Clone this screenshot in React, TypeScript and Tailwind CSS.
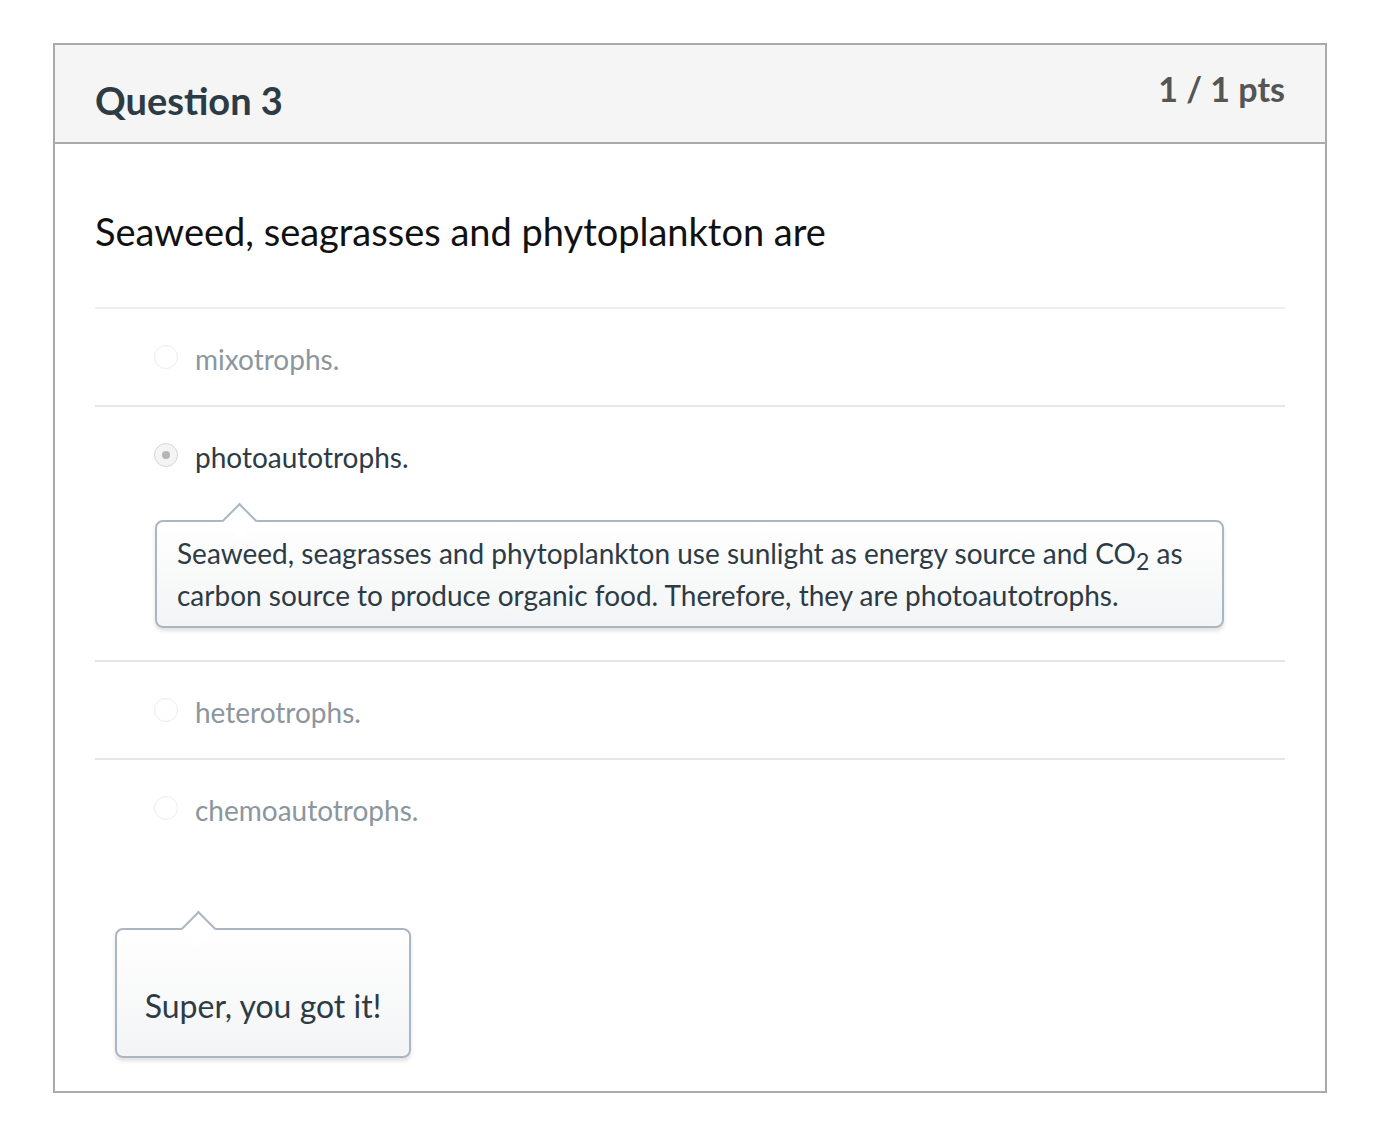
const ANSWERS = [
  { text: 'mixotrophs.', selected: false },
  { text: 'photoautotrophs.', selected: true },
  { text: 'heterotrophs.', selected: false },
  { text: 'chemoautotrophs.', selected: false },
];

function Radio({ selected }: { selected: boolean }) {
  return (
    <span
      className={`flex h-[24px] w-[24px] shrink-0 items-center justify-center rounded-full border ${
        selected ? 'border-[#d6d6d6] bg-[#f4f4f4]' : 'border-[#ececec] bg-white'
      }`}
    >
      {selected && <span className="h-[8px] w-[8px] rounded-full bg-[#b5b5b5]" />}
    </span>
  );
}

function Bubble({ children, arrowLeft, className }: { children: React.ReactNode; arrowLeft: string; className: string }) {
  return (
    <div
      className={`relative rounded-[8px] border-2 border-[#aab6c2] bg-gradient-to-b from-white to-[#f3f4f5] shadow-[0_3px_4px_rgba(0,0,0,0.12)] ${className}`}
    >
      <span
        className={`absolute top-[-14px] h-[25px] w-[25px] rotate-45 border-l-2 border-t-2 border-[#aab6c2] bg-white ${arrowLeft}`}
      />
      <div className="relative">{children}</div>
    </div>
  );
}

export default function App() {
  return (
    <div className="min-h-[1138px] bg-white pl-[53px] pt-[43px] font-['Lato','Noto_Sans',sans-serif] text-[#2d3b45]">
      <div className="w-[1274px] border-2 border-[#aaaaaa]">
        <div className="flex h-[99px] items-start justify-between border-b-2 border-[#aaaaaa] bg-[#f5f5f5] px-[40px]">
          <h2 className="mt-[31px] text-[38px] font-bold leading-[48px]">Question 3</h2>
          <div className="mt-[24px] text-[34px] font-bold leading-[40px] text-[#555555]">1 / 1 pts</div>
        </div>
        <div className="px-[40px] pb-[33px]">
          <p className="mt-[63px] text-[38px] leading-[48px] text-[#111111]">Seaweed, seagrasses and phytoplankton are</p>
          <div className="mt-[52px]">
            {ANSWERS.map((a) => (
              <div key={a.text} className="border-t-2 border-[#e6e6e6] first:border-[#ededed]">
                <div className="flex h-[96px] items-center gap-[17px] pl-[59px]">
                  <Radio selected={a.selected} />
                  <span className={`mt-[4px] text-[28px] leading-[34px] ${a.selected ? 'text-[#2d3b45]' : 'text-[#8b969e]'}`}>
                    {a.text}
                  </span>
                </div>
                {a.selected && (
                  <div className="pb-[32px] pl-[60px] pr-[60px] pt-[17px]">
                    <Bubble arrowLeft="left-[70px]" className="w-[1069px] px-[20px] py-[10px]">
                      <p className="text-[28px] leading-[42px]">
                        Seaweed, seagrasses and phytoplankton use sunlight as energy source and CO
                        <sub className="text-[23px] leading-none">2</sub> as carbon source to produce organic food. Therefore, they are photoautotrophs.
                      </p>
                    </Bubble>
                  </div>
                )}
              </div>
            ))}
          </div>
          <div className="mt-[72px] pl-[20px]">
            <Bubble arrowLeft="left-[69px]" className="w-[296px] pb-[30px] pt-[56px]">
              <p className="text-center text-[32px] leading-[40px]">Super, you got it!</p>
            </Bubble>
          </div>
        </div>
      </div>
    </div>
  );
}
